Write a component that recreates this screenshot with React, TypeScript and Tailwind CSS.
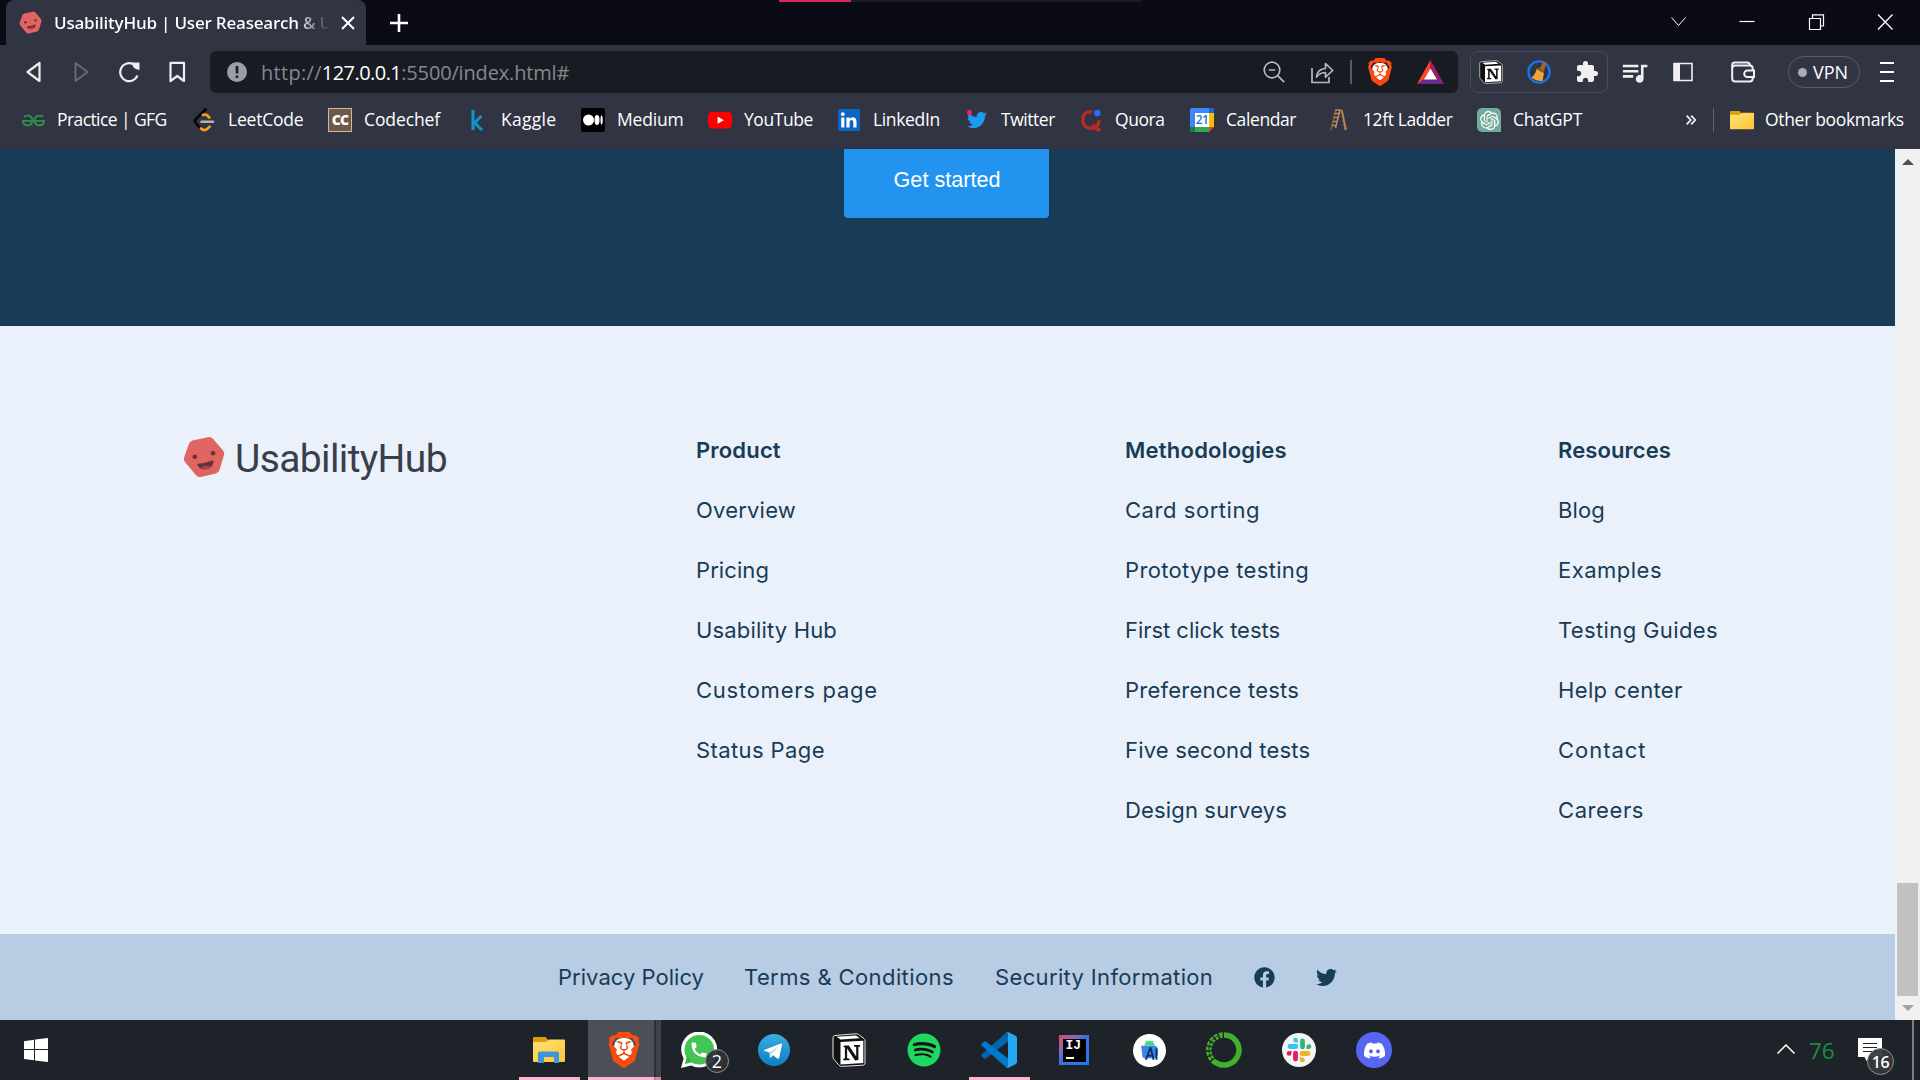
import type { ReactNode } from "react";
import { FaDiscord, FaFacebook, FaTwitter, FaSpotify } from "react-icons/fa";
import { SiBrave, SiOpenai, SiGeeksforgeeks } from "react-icons/si";
import { MdExtension, MdQueueMusic } from "react-icons/md";

function Smiley({ className }: { className: string }) {
  return (
    <svg viewBox="0 0 42 42" className={className}>
      <path d="M9.500 4.500 25 1.200q3-.6 5 1.600L40 14.500q1.700 2 1 4.500L36.500 34q-.9 2.800-3.700 3.500L18 41q-3 .6-5-1.800L2 26q-1.700-2-.9-4.500L6 7.800q1-2.600 3.500-3.300Z" fill="#e06461" />
      <circle cx="11.800" cy="20.700" r="2.300" fill="#6b2f38" />
      <circle cx="30" cy="17.300" r="2.300" fill="#6b2f38" />
      <path d="M15 27.800q7.500-.6 14.600-3.300 1.200 0 1 1.200-1.300 6.300-7 7.500-5.800 1-9-3.700-.6-1.400.4-1.700Z" fill="#6b2f38" />
      <path d="M18 31.700q4.500-3 10-1.500-2 2.600-4.800 3-3 .4-5.200-1.500Z" fill="#a9484c" />
    </svg>
  );
}

function BraveIcon({ className }: { className: string }) {
  return (
    <span className={`relative block ${className}`}>
      <span className="absolute inset-x-[22%] top-[18%] bottom-[20%] rounded-[40%] bg-white" />
      <SiBrave className="relative block h-full w-full text-[#fb4a10]" />
    </span>
  );
}

function NotionIcon({ className }: { className: string }) {
  return (
    <svg viewBox="0 0 34 34" className={className}>
      <path d="M3 2.500 24 .8q1.500 0 2.600.8L32 5.600q1 .8 1 2V30q0 2-2 2.200L9.500 33.400q-1.500 0-2.400-1L2 26.400q-1-1.200-1-2.600V4.600Q1 2.800 3 2.500Z" fill="#111" stroke="#e8e6e0" strokeWidth="1" />
      <path d="M4.500 3.800 24 2.400l3.800 2.800L8.600 6.600Z" fill="#fff" />
      <path d="M8.500 9 31.300 7.700V30L8.500 31.400Z" fill="#fff" />
      <path d="M12.500 12.500h4.300l7.400 11v-9.400l-2.200-.6v-1.400h6v1.400l-1.600.6v13l-3.300.3-8-11.800v9.600l2.400.6v1.400h-6.300v-1.400l1.700-.6V14.400l-1.700-.6Z" fill="#111" />
    </svg>
  );
}

function Folder({ className, blue }: { className: string; blue?: boolean }) {
  return (
    <svg viewBox="0 0 32 26" preserveAspectRatio="none" className={className}>
      <defs>
        <linearGradient id="folder" x1="0" y1="0" x2="1" y2="1">
          <stop offset="0" stopColor="#ffe07a" />
          <stop offset="1" stopColor="#fcc635" />
        </linearGradient>
      </defs>
      <path d="M0 1q0-1 1-1h11.500l2.500 2.500V8H0Z" fill="#dd9e0c" />
      <path d="M0 5h13l3-2.500h15q1 0 1 1V24q0 1-1 1H1q-1 0-1-1Z" fill="url(#folder)" />
      {blue && <path d="M5 26V16q0-1.500 1.500-1.500h18Q26 14.500 26 16v10h-5v-6H11v6Z" fill="#3c96db" />}
    </svg>
  );
}

type Mark = { name: string; slot: string; track: string; icon: ReactNode };

const bookmarks: Mark[] = [
  { name: "Practice | GFG", slot: "w-[171px]", track: "tracking-[-0.58px]", icon: <SiGeeksforgeeks className="size-[23px] text-[#2f8d46]" /> },
  {
    name: "LeetCode", slot: "w-[136px]", track: "tracking-[-0.22px]",
    icon: (
      <svg viewBox="0 0 24 24" className="size-6" fill="none" strokeWidth="2.600" strokeLinecap="round">
        <path d="M13.500 1.500 3.800 11.200q-1.600 1.800 0 3.800l4.700 5.300" stroke="#050505" />
        <path d="m8.800 20.300q3.300 3.300 6.200.8l2.600-2.500M11 7q2.500-1.200 4.300.5l2 2" stroke="#ffa116" />
        <path d="M9.500 13.700H21" stroke="#b3b3b3" />
      </svg>
    ),
  },
  {
    name: "Codechef", slot: "w-[137px]", track: "tracking-[-0.1px]",
    icon: <span className="flex size-6 items-center justify-center border border-[#cdb9a4] bg-[#6d5848] pb-0.5 font-['Open_Sans',sans-serif] text-[14px] font-extrabold tracking-[-0.8px] text-white">CC</span>,
  },
  {
    name: "Kaggle", slot: "w-[116px]", track: "tracking-[0.28px]",
    icon: (
      <svg viewBox="0 0 24 24" className="size-6" fill="none" stroke="#1395c9" strokeWidth="3">
        <path d="M8 2v20M16.500 8l-7 6.800L17 22" />
      </svg>
    ),
  },
  {
    name: "Medium", slot: "w-[127px]", track: "tracking-[-0.2px]",
    icon: (
      <svg viewBox="0 0 24 24" className="size-6">
        <rect width="24" height="24" rx="2" fill="#000" />
        <circle cx="7.500" cy="12" r="5.500" fill="#fff" />
        <ellipse cx="16" cy="12" rx="2.500" ry="5" fill="#fff" />
        <ellipse cx="20.600" cy="12" rx="1.100" ry="4.600" fill="#fff" />
      </svg>
    ),
  },
  {
    name: "YouTube", slot: "w-[129px]", track: "tracking-[-0.45px]",
    icon: (
      <svg viewBox="0 0 24 24" className="size-6">
        <rect y="3.800" width="24" height="16.800" rx="4.500" fill="#f00" />
        <path d="m9.600 8.600 6.200 3.600-6.200 3.600Z" fill="#fff" />
      </svg>
    ),
  },
  {
    name: "LinkedIn", slot: "w-32", track: "tracking-[-0.35px]",
    icon: (
      <svg viewBox="0 0 24 24" className="size-6">
        <rect x="1" y="1" width="22" height="22" rx="2" fill="#0a66c2" />
        <path d="M4.200 9.500h3.200v10H4.200zM9.400 9.500h3.100v1.400q1-1.700 3.200-1.700 3.800 0 3.800 4.500v5.800h-3.200v-5.200q0-2.300-1.700-2.300-2 0-2 2.400v5.100H9.400z" fill="#fff" />
        <circle cx="5.800" cy="6.200" r="1.900" fill="#fff" />
      </svg>
    ),
  },
  {
    name: "Twitter", slot: "w-[114px]", track: "tracking-[-0.45px]",
    icon: (
      <span className="relative flex size-6 items-center justify-center">
        <FaTwitter className="size-[20px] text-[#1d9bf0]" />
        <span className="absolute top-0.5 left-0.5 size-[5px] rounded-full bg-[#f91880]" />
      </span>
    ),
  },
  {
    name: "Quora", slot: "w-[111px]", track: "tracking-[-0.45px]",
    icon: (
      <svg viewBox="0 0 24 24" className="size-6" fill="none" stroke="#b92b27" strokeWidth="3.400">
        <path d="M13 3.800q-9-1-9.200 8 .2 8.500 8.500 8.500 7.500 0 7.700-8M14 16.500l4.500 5.300h3" />
        <circle cx="18.300" cy="5" r="3.200" fill="#2e69ff" stroke="none" />
      </svg>
    ),
  },
  {
    name: "Calendar", slot: "w-[137px]", track: "tracking-[-0.4px]",
    icon: (
      <span className="relative block size-6">
        <svg viewBox="0 0 24 24" className="block size-6">
          <rect width="24" height="24" rx="1.500" fill="#4285f4" />
          <path d="M19 0h3.500Q24 0 24 1.500V5h-5Z" fill="#1967d2" />
          <path d="M19 5h5v14h-5Z" fill="#fbbc04" />
          <path d="M0 19h19v5H1.500Q0 24 0 22.500Z" fill="#34a853" />
          <path d="M0 19h5v5H1.500Q0 24 0 22.500Z" fill="#188038" />
          <path d="M19 19h5l-5 5Z" fill="#ea4335" />
          <path d="M24 19v5h-5Z" fill="#313442" />
          <path d="M5 5h14v14H5Z" fill="#fff" />
        </svg>
        <span className="absolute inset-0 flex items-center justify-center text-[12px] font-semibold tracking-[-0.5px] text-[#1a73e8]">21</span>
      </span>
    ),
  },
  {
    name: "12ft Ladder", slot: "w-[150px]", track: "tracking-[-0.4px]",
    icon: (
      <svg viewBox="0 0 24 24" className="size-6" fill="none" strokeWidth="1.500">
        <path d="M8.500 2 4 22M14.500 2l5 20M13.500 5h2M14 9h3.500M15 13h3.500M15.500 17h4M16.500 20.500h4" stroke="#7d5a3a" />
        <path d="M13 2 8.500 20M15 2l3.500 20M8 2h6M7.500 5.500H12.500M6.800 9.500h4.500M6 13.500h4.500M5 17.500h4.500" stroke="#b98d5e" />
      </svg>
    ),
  },
  {
    name: "ChatGPT", slot: "w-[170px]", track: "tracking-[-0.22px]",
    icon: <span className="flex size-6 items-center justify-center rounded-[5px] rounded-br-none bg-[#74aa9c]"><SiOpenai className="size-[19px] text-white" /></span>,
  },
];

function BrowserChrome() {
  return (
    <header className="h-[149px] bg-[#313442] font-['Open_Sans','Noto_Sans',sans-serif] text-white">
      <div className="relative flex h-[45px] bg-[#0b0b15] pl-1.5">
        <div className="absolute top-0 left-[779px] flex h-0.5 w-[362px] bg-[#1c1f1e]">
          <div className="w-[72px] bg-[#d9295f]" />
        </div>
        <div className="flex w-[360px] items-center rounded-t-lg bg-[#313442] pl-[13px]">
          <Smiley className="size-[23px]" />
          <div className="ml-3 w-[276px] bg-linear-to-r from-white from-88% to-[#313442] bg-clip-text text-[17px] font-semibold tracking-[-0.22px] whitespace-nowrap text-transparent">
            UsabilityHub | User Reasearch &amp; U
          </div>
          <svg viewBox="0 0 14 14" className="ml-[11px] size-[14px]" stroke="#fff" strokeWidth="2">
            <path d="m1 1 12 12M13 1 1 13" />
          </svg>
        </div>
        <svg viewBox="0 0 18 18" className="mt-[14px] ml-6 size-[18px]" stroke="#fff" strokeWidth="2.600">
          <path d="M9 0v18M0 9h18" />
        </svg>
        <svg viewBox="0 0 222 16" className="mt-[14px] mr-[27px] ml-auto h-4 w-[222px]" fill="none" stroke="#fff" strokeWidth="1.200">
          <path d="m.5 3.500 7 8 7-8" strokeWidth="1" />
          <path d="M68.500 7.500h15" />
          <path d="M138.500 4.500h11v11h-11zM141.500 4.500V.8h11V12h-3" />
          <path d="m207 .5 14.500 15M221.500.5l-14.500 15" strokeWidth="1.300" />
        </svg>
      </div>

      <div className="flex h-[54px] items-center">
        <svg viewBox="0 0 164 24" className="ml-6 h-6 w-[164px]" fill="none" strokeWidth="2.200" strokeLinejoin="round">
          <path d="M15.500 3v18L3.500 12Z" stroke="#eee" />
          <path d="M51.500 3v18l12-9Z" stroke="#666977" strokeWidth="2" />
          <path d="M113.500 15.500A9 9 0 1 1 109 4" stroke="#eee" strokeWidth="2.200" />
          <path d="M108 2.500h7.500v7.500q-7-.5-7.500-7.500Z" fill="#eee" />
          <path d="M146.500 2.800h13.500V21l-6.700-5-6.800 5Z" stroke="#eee" />
        </svg>
        <div className="ml-[22px] flex h-[42px] w-[1248px] items-center rounded-md bg-[#191b22] pl-4">
          <svg viewBox="0 0 20 20" className="ml-px size-5">
            <circle cx="10" cy="10" r="10" fill="#9b9da8" />
            <path d="M8.700 4h2.600v7.500H8.700zM8.700 13.500h2.600V16H8.700z" fill="#191b22" />
          </svg>
          <div className="mt-px ml-[14px] flex text-[20px] text-[#85878f]">
            <span className="tracking-[0.3px]">http://</span>
            <span className="tracking-[-0.55px] text-white">127.0.0.1</span>
            <span className="tracking-[-0.16px]">:5500/index.html#</span>
          </div>
          <svg viewBox="0 0 24 24" className="mr-6 ml-auto size-6" fill="none" stroke="#b6b8be" strokeWidth="1.700">
            <circle cx="10" cy="10" r="7.800" />
            <path d="m15.700 15.700 6.500 6.500M6.800 10h6.400" />
          </svg>
          <svg viewBox="0 0 24 24" className="mr-4 size-6" fill="none" stroke="#b6b8be" strokeWidth="1.700">
            <path d="M2 8v14.500h17V17" />
            <path d="M6.500 17q.8-8 9-8.500V3.500l7.200 7-7.200 6.700v-4.700q-5.500 0-9 4.500Z" strokeLinejoin="round" />
          </svg>
          <span className="h-6 w-0.5 bg-[#5b5d65]" />
          <BraveIcon className="ml-[14px] h-7 w-[28px]" />
          <svg viewBox="0 0 27 24" className="mr-[14px] ml-[23px] h-6 w-[27px]">
            <path d="M13.500 0v9L7 20l-7 4Z" fill="#ff4724" />
            <path d="M13.500 0 27 24l-7-4-6.500-11Z" fill="#9e1f63" />
            <path d="M0 24h27l-7-5H7Z" fill="#662d91" />
            <path d="m13.500 8.500 6.500 11H7Z" fill="#fff" />
          </svg>
        </div>
        <div className="ml-3 flex h-[42px] w-[138px] items-center rounded-lg border border-[#494b5a] pl-[8px]">
          <NotionIcon className="size-6" />
          <svg viewBox="0 0 24 24" className="ml-[24px] size-6">
            <circle cx="12" cy="12" r="10.600" fill="none" stroke="#1a73e8" strokeWidth="2.400" />
            <path d="m16.500 1.500 3 1.200L16.500 12l-4.500-2Z" fill="#a9652f" />
            <path d="m9.500 9 7.500 4-1.500 8q-6 .5-11-3.500 4-3 5-8.500Z" fill="#f1a33a" />
            <path d="m9.500 9 1.500-1.500 6.500 3.500-.5 2Z" fill="#8c532a" />
          </svg>
          <MdExtension className="ml-[24px] size-6 text-[#f0f0f0]" />
        </div>
        <MdQueueMusic className="ml-[11px] size-[31px] text-[#f0f0f0]" />
        <svg viewBox="0 0 20 20" className="ml-[23px] size-5">
          <path d="M1 1.500h18v17H1Z" fill="none" stroke="#f0f0f0" strokeWidth="1.600" />
          <path d="M1 1h6v18H1Z" fill="#f0f0f0" />
        </svg>
        <svg viewBox="0 0 24 22" className="ml-[38px] h-[22px] w-6" fill="none" stroke="#f0f0f0" strokeWidth="2">
          <rect x="1.200" y="4.500" width="20.500" height="16" rx="3" />
          <path d="M1.200 7V4q0-2.500 2.500-2.500H16q3 0 3 3" />
          <path d="M23 9.500h-6.500a3.300 3.300 0 0 0 0 6.600H23Z" fill="#313442" />
        </svg>
        <div className="ml-[33px] flex h-8 w-[72px] items-center rounded-full border border-[#585b6d] pl-[9px]">
          <span className="size-[9px] rounded-full bg-[#a7aabb]" />
          <span className="ml-1.5 text-[18px]">VPN</span>
        </div>
        <div className="ml-5 flex w-[14px] flex-col gap-[7px]">
          <span className="h-0.5 bg-white" />
          <span className="h-0.5 bg-white" />
          <span className="h-0.5 bg-white" />
        </div>
      </div>

      <nav className="flex h-[42px] items-center pl-[21px] text-[17.5px] whitespace-nowrap">
        {bookmarks.map((b) => (
          <a key={b.name} className={`flex shrink-0 items-center gap-3 ${b.slot}`}>
            <span className="flex size-6 shrink-0 items-center justify-center">{b.icon}</span>
            <span className={`-mt-px ${b.track}`}>{b.name}</span>
          </a>
        ))}
        <svg viewBox="0 0 10 10" className="ml-[39px] size-[10px] shrink-0" fill="none" stroke="#eee" strokeWidth="1.800">
          <path d="m.7.7 4 4.300-4 4.300M5.200.7l4 4.300-4 4.300" />
        </svg>
        <span className="ml-[17px] h-6 w-px bg-[#61636f]" />
        <Folder className="ml-4 h-[19px] w-[24px]" />
        <span className="-mt-px ml-[11px] tracking-[-0.32px]">Other bookmarks</span>
      </nav>
    </header>
  );
}

type Link = [label: string, track: string];

const columns: { title: Link; place: string; links: Link[] }[] = [
  {
    title: ["Product", "tracking-[0.17px]"],
    place: "w-[429px]",
    links: [
      ["Overview", "tracking-[0.21px]"],
      ["Pricing", "tracking-[0.09px]"],
      ["Usability Hub", "tracking-[0.17px]"],
      ["Customers page", "tracking-[0.75px]"],
      ["Status Page", "tracking-[0.4px]"],
    ],
  },
  {
    title: ["Methodologies", "tracking-[0.23px]"],
    place: "w-[433px]",
    links: [
      ["Card sorting", "tracking-[0.55px]"],
      ["Prototype testing", "tracking-[0.34px]"],
      ["First click tests", "tracking-[-0.04px]"],
      ["Preference tests", "tracking-[0.23px]"],
      ["Five second tests", "tracking-[0.18px]"],
      ["Design surveys", "tracking-[0.15px]"],
    ],
  },
  {
    title: ["Resources", "tracking-[0.09px]"],
    place: "w-[300px]",
    links: [
      ["Blog", "tracking-[0.15px]"],
      ["Examples", "tracking-[0.49px]"],
      ["Testing Guides", "tracking-[0.37px]"],
      ["Help center", "tracking-[0.37px]"],
      ["Contact", "tracking-[0.97px]"],
      ["Careers", "tracking-[0.59px]"],
    ],
  },
];

function Page() {
  return (
    <div className="w-[1895px] font-['Inter',sans-serif] text-[22px] text-[#183b56]">
      <section className="flex h-[177px] justify-center bg-[#183b56]">
        <button className="ml-[-2px] h-[69px] w-[205px] rounded-b-[4px] bg-[#2294f0] pb-[6px] pl-px font-['Liberation_Sans',sans-serif] text-[21.6px] text-white">
          Get started
        </button>
      </section>
      <footer>
        <div className="flex h-[608px] bg-[#eaf1fa] pt-[94px] pl-[183px]">
          <div className="flex w-[513px] items-start">
            <Smiley className="mt-[16px] size-[42px]" />
            <span className="mt-[14px] ml-[10px] font-['Roboto',sans-serif] text-[39px] leading-[50px] tracking-[-0.62px] text-[#3a3e4a]">UsabilityHub</span>
          </div>
          {columns.map((c) => (
            <div key={c.title[0]} className={`flex flex-col ${c.place}`}>
              <h3 className={`flex h-[60px] items-center font-semibold ${c.title[1]}`}>{c.title[0]}</h3>
              {c.links.map(([label, track]) => (
                <a key={label} className={`flex h-[60px] items-center ${track}`}>{label}</a>
              ))}
            </div>
          ))}
        </div>
        <div className="flex h-[86px] items-center bg-[#b8cce4] pl-[558px] whitespace-nowrap">
          <a className="mt-px w-[186px] tracking-[0.03px]">Privacy Policy</a>
          <a className="mt-px w-[251px] tracking-[0.4px]">Terms &amp; Conditions</a>
          <a className="mt-px w-[259px] tracking-[0.35px]">Security Information</a>
          <FaFacebook className="size-[21px]" />
          <FaTwitter className="ml-[41px] size-[21px]" />
        </div>
      </footer>
    </div>
  );
}

function Scrollbar() {
  return (
    <div className="flex w-[25px] flex-col items-center bg-[#f1f1f1]">
      <svg viewBox="0 0 12 6" className="mt-[10px] h-1.5 w-3"><path d="M0 6 6 0l6 6Z" fill="#505050" /></svg>
      <div className="mt-[718px] h-[113px] w-[21px] bg-[#c1c1c1]" />
      <svg viewBox="0 0 12 6" className="mt-[9px] h-1.5 w-3"><path d="m0 0 6 6 6-6Z" fill="#a3a3a3" /></svg>
    </div>
  );
}

const apps: { name: string; running?: boolean; icon: ReactNode }[] = [
  { name: "explorer", running: true, icon: <Folder blue className="h-[26px] w-8" /> },
  { name: "brave", icon: <BraveIcon className="size-9" /> },
  {
    name: "whatsapp",
    icon: (
      <span className="relative block size-9">
        <svg viewBox="0 0 36 36" className="absolute inset-0">
          <path d="M0 36 2.600 26.500A18 18 0 1 1 10 33.500Z" fill="#fff" />
          <circle cx="18.300" cy="17.700" r="14.800" fill="#43c553" />
          <path d="m4 32 2-8 5.500 6Z" fill="#35b548" />
        </svg>
        <svg viewBox="0 0 24 24" className="absolute top-[8px] left-[8px] size-5">
          <path d="M6.600 10.800q2.200 4.400 6.600 6.600l2.200-2.200q.5-.5 1.100-.2 2 .6 3.500.7 1 0 1 1V20q0 1-1 1Q3 20 3 4q0-1 1-1h3.500q1 0 1 1 0 1.500.6 3.500.2.600-.3 1.100Z" fill="#fff" />
        </svg>
        <span className="absolute top-[17px] left-[24px] flex size-6 items-center justify-center rounded-full border border-[#8d8f92] bg-[#303236]/95 text-[18px] text-white">2</span>
      </span>
    ),
  },
  {
    name: "telegram",
    icon: (
      <svg viewBox="0 0 32 32" className="size-8">
        <defs><linearGradient id="tg" x1="0" y1="0" x2="0" y2="1"><stop stopColor="#37aee2" /><stop offset="1" stopColor="#0f7fbe" /></linearGradient></defs>
        <circle cx="16" cy="16" r="16" fill="url(#tg)" />
        <path d="M6 16 23 9.600q1.300-.3 1 1.200l-2.800 13q-.4 1.500-1.700.8L15 21.300l-2.200 2.200q-.8.600-1-.4l-.3-4.700L6 16.800q-.7-.4 0-.8Z" fill="#fff" />
        <path d="m11.500 18.400 8.800-5.800q.7-.3.300.2l-7.300 6.700-.5 4Z" fill="#b5d3e8" />
      </svg>
    ),
  },
  { name: "notion", icon: <NotionIcon className="size-[34px]" /> },
  {
    name: "spotify",
    icon: <span className="relative block size-[34px]"><span className="absolute inset-1 rounded-full bg-[#191414]" /><FaSpotify className="relative size-[34px] text-[#1ed760]" /></span>,
  },
  {
    name: "vscode", running: true,
    icon: (
      <svg viewBox="0 0 36 36" className="size-9">
        <path d="m27 9.500-22 17q-1 .6-1.800 0L.8 24.500q-1.200-1 0-2.200L25.500.3Q27 0 27 1.500Z" fill="#0065a9" />
        <path d="M27 26.500 5 9.500q-1-.6-1.800 0L.8 11.500q-1.200 1 0 2.200l24.700 22Q27 36 27 34.500Z" fill="#007acc" />
        <path d="M25.500.3Q26.500-.2 27.500.3l7 3.400Q36 4.500 36 6v24q0 1.500-1.500 2.300l-7 3.400q-1 .5-2 0 1.500-.2 1.500-2V2.300q0-1.800-1.500-2Z" fill="#24a9f2" />
      </svg>
    ),
  },
  {
    name: "intellij",
    icon: (
      <span className="flex size-[30px] items-center justify-center bg-linear-to-br from-[#e5316a] via-[#3f6fdc] via-45% to-[#087cfa]">
        <span className="flex size-[23px] flex-col bg-black pl-[3px] font-['Liberation_Mono',monospace] text-[13px] leading-[14px] font-bold text-white">
          IJ
          <span className="mt-[4px] h-[2px] w-2 bg-white" />
        </span>
      </span>
    ),
  },
  {
    name: "android studio",
    icon: (
      <svg viewBox="0 0 32 32" className="size-[33px]">
        <circle cx="16" cy="16" r="16" fill="#fff" />
        <path d="M8 11.500h14l2 2V20l-2 3.500H11Q9.500 23.500 9 21Z" fill="#3f80ee" />
        <path d="M11 11.500a5 5 0 0 1 10 0Z" fill="#3ddc84" />
        <path d="m12.300 6.500 1.200 2M19.700 6.500l-1.200 2" stroke="#3ddc84" />
        <path d="m17 13-4.500 12M17 13l3 12M14.500 21h5M22.800 14v11" fill="none" stroke="#0b3158" strokeWidth="1.800" />
      </svg>
    ),
  },
  {
    name: "anaconda",
    icon: (
      <svg viewBox="0 0 36 36" className="size-9" fill="none" stroke="#43b02a">
        <path d="M18 3a15 15 0 1 1-9 27" strokeWidth="5.500" />
        <path d="M9.500 30.500A15 15 0 0 1 18 3" strokeWidth="5.500" strokeDasharray="3.500 1.300" />
        <path d="M7 28A14 14 0 0 1 17 4.300M5 25.500A15.500 15.500 0 0 1 13.500 3" stroke="#1e232a" strokeWidth="1" strokeDasharray="2.500 2" />
      </svg>
    ),
  },
  {
    name: "slack",
    icon: (
      <svg viewBox="0 0 34 34" className="size-[34px]">
        <circle cx="17" cy="17" r="17" fill="#f5f5f5" />
        <path d="M5.500 13.500a2.400 2.400 0 0 1 2.400-2.400h6a2.400 2.400 0 0 1 0 4.800h-6a2.400 2.400 0 0 1-2.400-2.400ZM16 9.500h-2.400A2.400 2.400 0 1 1 16 7.100Z" fill="#36c5f0" />
        <path d="M20.500 5.500a2.400 2.400 0 0 1 2.400 2.400v6a2.400 2.400 0 0 1-4.800 0v-6a2.400 2.400 0 0 1 2.400-2.400ZM24.500 16v-2.400a2.400 2.400 0 1 1 2.400 2.400Z" fill="#2eb67d" />
        <path d="M28.500 20.500a2.400 2.400 0 0 1-2.400 2.400h-6a2.400 2.400 0 0 1 0-4.800h6a2.400 2.400 0 0 1 2.400 2.400ZM18 24.500h2.400a2.400 2.400 0 1 1-2.400 2.400Z" fill="#ecb22e" />
        <path d="M13.500 28.500a2.400 2.400 0 0 1-2.400-2.400v-6a2.400 2.400 0 0 1 4.800 0v6a2.400 2.400 0 0 1-2.400 2.400ZM9.500 18v2.400A2.400 2.400 0 1 1 7.100 18Z" fill="#e01e5a" />
      </svg>
    ),
  },
  { name: "discord", icon: <span className="flex size-9 items-center justify-center rounded-full bg-[#5865f2]"><FaDiscord className="size-[23px] text-white" /></span> },
];

function Taskbar() {
  return (
    <div className="flex h-[60px] bg-[#1e232a] font-['Open_Sans','Noto_Sans',sans-serif]">
      <svg viewBox="0 0 24 24" className="mt-[18px] ml-6 size-6 shrink-0">
        <path d="M0 3.300 10 1.700V11H0ZM11 1.600 24 0v11H11ZM0 12h10v10.300L0 21ZM11 12h13v12l-13-1.600Z" fill="#fff" />
      </svg>
      <div className="ml-[463.5px] flex">
        {apps.map((a) => (
          <div key={a.name} className="relative flex w-[75px] items-center justify-center">
            {a.name === "brave" && (
              <div className="absolute inset-y-0 left-[1.5px] flex w-[73px]">
                <div className="w-[66px] border-b-[3px] border-[#ffb2cb] bg-[#4c4f55]" />
                <div className="w-[2px] border-b-[3px] border-[#b87f95] bg-[#2d3136]" />
                <div className="w-[5px] border-b-[3px] border-[#cf90a8] bg-[#3f4247]" />
              </div>
            )}
            {a.running && <div className="absolute bottom-0 left-[7.5px] h-[3px] w-[61px] bg-[#ffb2cb]" />}
            <div className="relative">{a.icon}</div>
          </div>
        ))}
      </div>
      <svg viewBox="0 0 18 10" className="mt-6 ml-auto h-[10px] w-[18px]" fill="none" stroke="#fff" strokeWidth="1.500">
        <path d="m.5 9.500 8.500-8.500 8.500 8.500" />
      </svg>
      <span className="ml-[14px] w-[49px] text-[22.500px] leading-[61px] text-[#16913f]">76</span>
      <div className="relative mt-[18px] w-[54px]">
        <svg viewBox="0 0 24 24" className="size-6">
          <path d="M0 0h24v19H12l-3.500 4-2-4H0Z" fill="#fff" />
          <path d="M5 5.500h14M5 9.500h14M5 13.500h14" stroke="#1e232a" strokeWidth="1.200" />
        </svg>
        <span className="absolute top-[10px] left-[9px] flex size-[27px] items-center justify-center rounded-full border border-[#8d8f92] bg-[#37393d]/95 text-[16px] font-semibold tracking-[-0.5px] text-white">16</span>
      </div>
      <div className="mr-[6px] w-0.5 bg-[#7b7e82]" />
    </div>
  );
}

export default function App() {
  return (
    <div className="flex h-[1080px] w-[1920px] flex-col overflow-hidden">
      <BrowserChrome />
      <div className="flex h-[871px]">
        <Page />
        <Scrollbar />
      </div>
      <Taskbar />
    </div>
  );
}
